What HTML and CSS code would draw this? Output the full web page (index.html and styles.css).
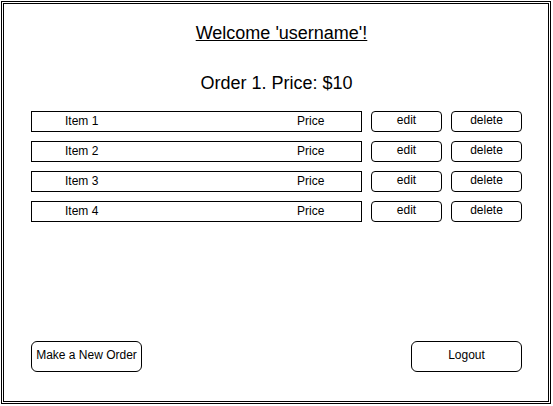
FILE: index.html
```html
<!DOCTYPE html>
<html>
<head>
<meta charset="utf-8">
<link rel="stylesheet" href="styles.css">
</head>
<body>
<div class="frame">
  <h1 class="welcome">Welcome 'username'!</h1>
  <h2 class="order">Order 1. Price: $10</h2>
  <div class="items">
    <div class="row">
      <div class="item"><span>Item 1</span><span>Price</span></div>
      <div class="btn">edit</div>
      <div class="btn">delete</div>
    </div>
    <div class="row">
      <div class="item"><span>Item 2</span><span>Price</span></div>
      <div class="btn">edit</div>
      <div class="btn">delete</div>
    </div>
    <div class="row">
      <div class="item"><span>Item 3</span><span>Price</span></div>
      <div class="btn">edit</div>
      <div class="btn">delete</div>
    </div>
    <div class="row">
      <div class="item"><span>Item 4</span><span>Price</span></div>
      <div class="btn">edit</div>
      <div class="btn">delete</div>
    </div>
  </div>
  <div class="footer">
    <div class="big-btn">Make a New Order</div>
    <div class="big-btn">Logout</div>
  </div>
</div>
</body>
</html>
```

FILE: styles.css
```css
html, body {
  margin: 0;
  padding: 0;
  background: #fff;
}
body {
  font-family: "Liberation Sans", Arial, sans-serif;
  color: #000;
}
.frame {
  box-sizing: border-box;
  margin: 1px 0 0 1px;
  width: 550px;
  height: 403px;
  border: 3px double #000;
  padding: 0 26px 29px 27px;
  display: flex;
  flex-direction: column;
}
.welcome {
  margin: 19px 0 0;
  padding-left: 10px;
  font-size: 18px;
  font-weight: normal;
  text-align: center;
  text-decoration: underline;
  line-height: 21px;
}
.order {
  margin: 29px 0 0;
  font-size: 18px;
  font-weight: normal;
  text-align: center;
  line-height: 21px;
}
.items {
  margin-top: 17px;
  display: flex;
  flex-direction: column;
  gap: 9px;
}
.row {
  display: flex;
  gap: 9px;
  height: 21px;
}
.item {
  box-sizing: border-box;
  width: 331px;
  height: 21px;
  border: 1px solid #000;
  padding-left: 33px;
  padding-bottom: 1px;
  display: grid;
  grid-template-columns: 232px auto;
  align-items: center;
  font-size: 12px;
  line-height: 14px;
}
.btn {
  box-sizing: border-box;
  width: 71px;
  height: 21px;
  border: 1px solid #000;
  border-radius: 4px;
  font-size: 12px;
  line-height: 16px;
  text-align: center;
}
.footer {
  margin-top: auto;
  display: flex;
  justify-content: space-between;
}
.big-btn {
  box-sizing: border-box;
  width: 111px;
  height: 31px;
  border: 1px solid #000;
  border-radius: 6px;
  font-size: 12px;
  display: flex;
  align-items: center;
  justify-content: center;
  padding-bottom: 4px;
}
```
